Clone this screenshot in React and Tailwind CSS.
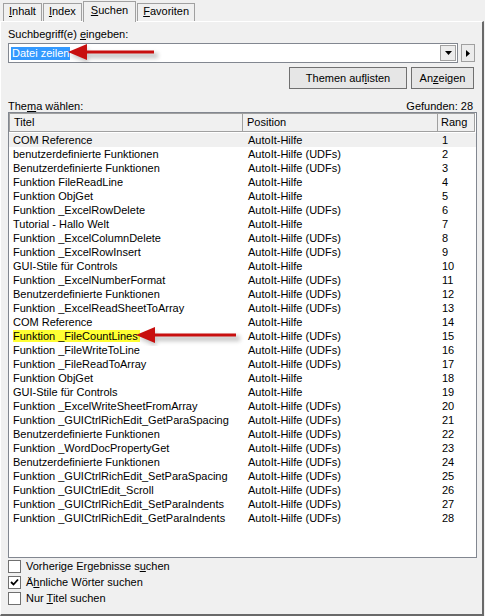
const rows = [
  ["COM Reference", "AutoIt-Hilfe"],
  ["benutzerdefinierte Funktionen", "AutoIt-Hilfe (UDFs)"],
  ["Benutzerdefinierte Funktionen", "AutoIt-Hilfe (UDFs)"],
  ["Funktion FileReadLine", "AutoIt-Hilfe"],
  ["Funktion ObjGet", "AutoIt-Hilfe"],
  ["Funktion _ExcelRowDelete", "AutoIt-Hilfe (UDFs)"],
  ["Tutorial - Hallo Welt", "AutoIt-Hilfe"],
  ["Funktion _ExcelColumnDelete", "AutoIt-Hilfe (UDFs)"],
  ["Funktion _ExcelRowInsert", "AutoIt-Hilfe (UDFs)"],
  ["GUI-Stile für Controls", "AutoIt-Hilfe"],
  ["Funktion _ExcelNumberFormat", "AutoIt-Hilfe (UDFs)"],
  ["Benutzerdefinierte Funktionen", "AutoIt-Hilfe (UDFs)"],
  ["Funktion _ExcelReadSheetToArray", "AutoIt-Hilfe (UDFs)"],
  ["COM Reference", "AutoIt-Hilfe"],
  ["Funktion _FileCountLines", "AutoIt-Hilfe (UDFs)"],
  ["Funktion _FileWriteToLine", "AutoIt-Hilfe (UDFs)"],
  ["Funktion _FileReadToArray", "AutoIt-Hilfe (UDFs)"],
  ["Funktion ObjGet", "AutoIt-Hilfe"],
  ["GUI-Stile für Controls", "AutoIt-Hilfe"],
  ["Funktion _ExcelWriteSheetFromArray", "AutoIt-Hilfe (UDFs)"],
  ["Funktion _GUICtrlRichEdit_GetParaSpacing", "AutoIt-Hilfe (UDFs)"],
  ["Benutzerdefinierte Funktionen", "AutoIt-Hilfe (UDFs)"],
  ["Funktion _WordDocPropertyGet", "AutoIt-Hilfe (UDFs)"],
  ["Benutzerdefinierte Funktionen", "AutoIt-Hilfe (UDFs)"],
  ["Funktion _GUICtrlRichEdit_SetParaSpacing", "AutoIt-Hilfe (UDFs)"],
  ["Funktion _GUICtrlEdit_Scroll", "AutoIt-Hilfe (UDFs)"],
  ["Funktion _GUICtrlRichEdit_SetParaIndents", "AutoIt-Hilfe (UDFs)"],
  ["Funktion _GUICtrlRichEdit_GetParaIndents", "AutoIt-Hilfe (UDFs)"],
];

function Arrow({ width }) {
  return (
    <svg width={width + 12} height="20" className="pointer-events-none">
      <defs>
        <filter id={"sh" + width} x="-10%" y="-50%" width="120%" height="200%">
          <feGaussianBlur stdDeviation="2" />
        </filter>
      </defs>
      <g filter={"url(#sh" + width + ")"} opacity="0.35">
        <path d={`M2 12 L20 5 L20 10 L${width} 10 L${width} 15 L20 15 L20 20 Z`} fill="#555" />
      </g>
      <path d={`M0 9 L19 1 L19 7.5 L${width - 4} 7.5 L${width - 4} 10.5 L19 10.5 L19 17 Z`} fill="#c80f0f" />
    </svg>
  );
}

function Tab({ children, active }) {
  return (
    <div
      className={
        active
          ? "relative z-10 -mb-px h-[21px] border border-b-0 border-[#a0a0a0] bg-[#f0f0f0] px-[7px] pt-[2px]"
          : "mt-[2px] h-[18px] border border-b-0 border-[#a0a0a0] bg-[#f0f0f0] px-[5px] pt-[1px]"
      }
    >
      {children}
    </div>
  );
}

function Check({ checked, children }) {
  return (
    <div className="flex h-[16px] items-center gap-[5px]">
      <div className="flex h-[13px] w-[13px] items-center justify-center border border-[#707070] bg-white">
        {checked && (
          <svg width="9" height="9" viewBox="0 0 9 9">
            <path d="M1 4 L3.5 6.5 L8 1.5" stroke="#000" strokeWidth="1.8" fill="none" />
          </svg>
        )}
      </div>
      <span>{children}</span>
    </div>
  );
}

export default function App() {
  return (
    <div
      className="h-[616px] w-[485px] bg-[#f0f0f0] text-[11px] leading-[13px] text-black"
      style={{ fontFamily: "Tahoma, 'Liberation Sans', Arial, sans-serif" }}
    >
      <div className="flex h-[21px] items-end gap-[1px] pl-[3px]">
        <Tab>
          <u>I</u>nhalt
        </Tab>
        <Tab>
          <u>I</u>ndex
        </Tab>
        <Tab active>
          <u>S</u>uchen
        </Tab>
        <Tab>
          <u>F</u>avoriten
        </Tab>
      </div>
      <div className="h-[595px] w-[484px] border-t border-l border-t-white border-l-white border-r-2 border-b-2 border-r-[#696969] border-b-[#696969] px-[7px] pt-[6px]">
        <div className="h-[15px]">
          Suchbegriff(e) <u>e</u>ingeben:
        </div>
        <div className="flex h-[20px] items-center gap-[3px]">
          <div className="relative flex h-[20px] w-[453px] items-center border border-[#828790] bg-white pl-[2px]">
            <span className="bg-[#3399ff] px-[1px] text-white">Datei zeilen</span>
            <div className="absolute left-[59px] top-[-1px]">
              <Arrow width={90} />
            </div>
            <div className="absolute right-[1px] top-[1px] flex h-[16px] w-[16px] items-center justify-center border border-[#a0a0a0] bg-[#ececec]">
              <svg width="7" height="4">
                <path d="M0 0 L7 0 L3.5 4 Z" fill="#000" />
              </svg>
            </div>
          </div>
          <div className="flex h-[18px] w-[14px] items-center justify-center border border-[#a0a0a0] bg-[#ececec]">
            <svg width="4" height="7">
              <path d="M0 0 L4 3.5 L0 7 Z" fill="#000" />
            </svg>
          </div>
        </div>
        <div className="mt-[4px] flex justify-end gap-[4px] pr-[1px]">
          <button className="h-[22px] w-[118px] border border-[#707070] bg-[#e6e6e6]">
            Themen auf<u>l</u>isten
          </button>
          <button className="h-[22px] w-[63px] border border-[#707070] bg-[#e6e6e6]">
            An<u>z</u>eigen
          </button>
        </div>
        <div className="mt-[11px] flex h-[12px] justify-between pr-[2px]">
          <span>
            The<u>m</u>a wählen:
          </span>
          <span>Gefunden: 28</span>
        </div>
        <div className="h-[446px] w-[469px] border border-[#828790] bg-white">
          <div className="flex h-[19px] items-stretch bg-white">
            <div className="flex w-[234px] items-center border border-[#a0a0a0] bg-[#f0f0f0] pl-[4px]">Titel</div>
            <div className="flex w-[195px] items-center border border-l-0 border-[#a0a0a0] bg-[#f0f0f0] pl-[4px]">Position</div>
            <div className="flex w-[37px] items-center border border-l-0 border-[#a0a0a0] bg-[#f0f0f0] pl-[3px]">Rang</div>
          </div>
          <div className="mt-[1px]">
            {rows.map((r, i) => (
              <div key={i} className={"flex h-[14px] items-center " + (i === 0 ? "bg-[#f0f0f0]" : "")}>
                <div className="relative w-[235px] pl-[4px]">
                  {i === 14 ? <span className="bg-[#ffff33] pr-[2px]">{r[0]}</span> : r[0]}
                  {i === 14 && (
                    <div className="absolute left-[127px] top-[-4px]">
                      <Arrow width={104} />
                    </div>
                  )}
                </div>
                <div className="w-[195px] pl-[4px]">{r[1]}</div>
                <div className="pl-[3px]">{i + 1}</div>
              </div>
            ))}
          </div>
        </div>
        <div className="flex flex-col">
          <Check>
            Vorherige Ergebnisse s<u>u</u>chen
          </Check>
          <Check checked>
            Ä<u>h</u>nliche Wörter suchen
          </Check>
          <Check>
            Nur <u>T</u>itel suchen
          </Check>
        </div>
      </div>
    </div>
  );
}
